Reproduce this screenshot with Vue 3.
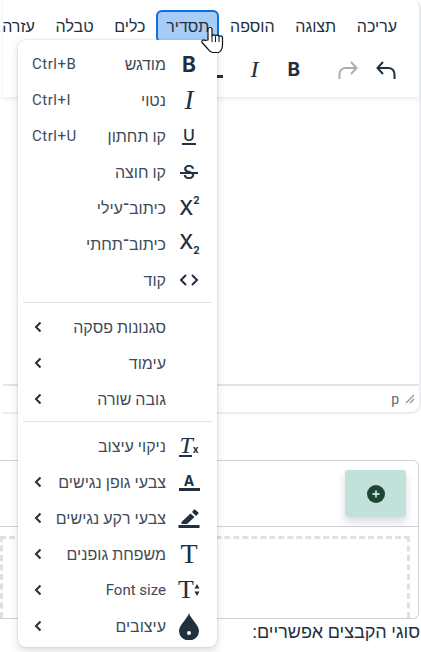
<script setup>
const menubar = ['עריכה', 'תצוגה', 'הוספה', 'תסדיר', 'כלים', 'טבלה', 'עזרה']
const groups = [
  [
    { icon: 'bold', label: 'מודגש', key: 'Ctrl+B' },
    { icon: 'italic', label: 'נטוי', key: 'Ctrl+I' },
    { icon: 'underline', label: 'קו תחתון', key: 'Ctrl+U' },
    { icon: 'strike', label: 'קו חוצה' },
    { icon: 'sup', label: 'כיתוב־עילי' },
    { icon: 'sub', label: 'כיתוב־תחתי' },
    { icon: 'code', label: 'קוד' }
  ],
  [
    { label: 'סגנונות פסקה', more: true },
    { label: 'עימוד', more: true },
    { label: 'גובה שורה', more: true }
  ],
  [
    { icon: 'clear', label: 'ניקוי עיצוב' },
    { icon: 'color', label: 'צבעי גופן נגישים', more: true },
    { icon: 'pen', label: 'צבעי רקע נגישים', more: true },
    { icon: 'family', label: 'משפחת גופנים', more: true },
    { icon: 'size', label: 'Font size', more: true, latin: true },
    { icon: 'drop', label: 'עיצובים', more: true }
  ]
]
</script>

<template>
  <div class="page" dir="rtl">
    <section class="editor">
      <div class="head">
        <nav class="menubar">
          <span v-for="m in menubar" :key="m" class="mb-item" :class="{ active: m === 'תסדיר' }">{{ m }}</span>
        </nav>
        <div class="toolbar">
          <svg class="tb-icon" viewBox="0 0 20 20"><path d="M7 2 1.500 8 7 14M1.500 8H12.500a6 6 0 0 1 6 6v5" /></svg>
          <svg class="tb-icon redo" viewBox="0 0 20 20"><path d="M13 2 18.500 8 13 14M18.500 8H7.500a6 6 0 0 0-6 6v5" /></svg>
          <span class="tb-b">B</span>
          <span class="tb-i">I</span>
          <span class="tb-u"></span>
        </div>
      </div>
      <div class="body"></div>
      <div class="status">
        <svg class="grip" viewBox="0 0 10 10"><path d="M9 1 1 9M9 5 5 9" /></svg>
        <span class="path">p</span>
      </div>
    </section>

    <section class="upload">
      <div class="upload-head">
        <button class="add" type="button">
          <svg viewBox="0 0 18 18" class="add-icon"><circle cx="9" cy="9" r="9" fill="#1d4637" /><path d="M9 5.500v7M5.500 9h7" stroke="#c3e1db" stroke-width="1.800" /></svg>
        </button>
      </div>
      <div class="upload-body"><div class="dropzone"></div></div>
    </section>
    <p class="types">סוגי הקבצים אפשריים:</p>

    <div class="menu">
      <template v-for="(group, g) in groups" :key="g">
        <hr v-if="g" class="sep" />
        <div v-for="row in group" :key="row.label" class="row">
          <span class="ico">
            <span v-if="row.icon === 'bold'" class="g-bold">B</span>
            <span v-else-if="row.icon === 'italic'" class="g-italic">I</span>
            <span v-else-if="row.icon === 'underline'" class="g-under">U</span>
            <span v-else-if="row.icon === 'strike'" class="g-strike">S</span>
            <span v-else-if="row.icon === 'sup'" class="g-x">X<sup>2</sup></span>
            <span v-else-if="row.icon === 'sub'" class="g-x g-x-sub">X<sub>2</sub></span>
            <svg v-else-if="row.icon === 'code'" viewBox="0 0 20 14" class="svg-code"><path d="M7 2 2 7l5 5M13 2l5 5-5 5" /></svg>
            <span v-else-if="row.icon === 'clear'" class="g-clear"><i>T</i><small>x</small></span>
            <span v-else-if="row.icon === 'color'" class="g-color">A</span>
            <svg v-else-if="row.icon === 'pen'" viewBox="0 0 22 20" class="svg-fill"><path d="M3.500 14 12.500 5.500l4 3.500-7.500 7H3.500zM14 4l2-2.500 1 0 3.500 3 0 1L18 8z" /><rect x="0.500" y="17" width="21" height="3" /></svg>
            <span v-else-if="row.icon === 'family'" class="g-family">T</span>
            <span v-else-if="row.icon === 'size'" class="g-size">T<svg viewBox="0 0 6 14"><path d="M3 1 5.500 5.500H.5zM3 13 .5 8.500h5z" /></svg></span>
            <svg v-else-if="row.icon === 'drop'" viewBox="0 0 20 27" class="svg-drop"><path fill-rule="evenodd" d="M10 0C11 5 20 12 20 18a10 9.500 0 0 1-20 0C0 12 9 5 10 0zM10 18a2 2 0 1 0 0 4 2 2 0 0 0 0-4z" /></svg>
          </span>
          <span class="label" :class="{ latin: row.latin }">{{ row.label }}</span>
          <span v-if="row.key" class="key" dir="ltr">{{ row.key }}</span>
          <svg v-if="row.more" class="chev" viewBox="0 0 8 12"><path d="M6.500 1.500 2 6l4.500 4.500" /></svg>
        </div>
      </template>
    </div>

    <svg class="hand" viewBox="0 0 26 30">
      <path d="M8 16V5.500a2 2 0 0 1 4 0V12a2 2 0 0 1 3.500 0 2 2 0 0 1 3.500.5 2 2 0 0 1 3.500 1V21c0 4-2 7-4 7.500h-6c-2.500-.5-3.500-2-5-4L2 18.500c-1-2 1.500-3.500 3-2z" fill="#fff" stroke="#111" stroke-width="1.200" stroke-linejoin="round" />
      <path d="M12 12v6M15.500 12.500v5.500M19 13v5" stroke="#111" stroke-width="1" fill="none" />
    </svg>
  </div>
</template>

<style scoped>
.page {
  position: relative;
  width: 421px;
  height: 652px;
  overflow: hidden;
  background: #fff;
  color: #222f3e;
  font-family: Roboto, "Liberation Sans", sans-serif;
}
.editor {
  display: flex;
  flex-direction: column;
  height: 414px;
  width: 418px;
  box-sizing: border-box;
  border-right: 2px solid #eceef1;
  border-bottom: 2px solid #eceef1;
  border-radius: 0 8px 10px 0;
}
.head {
  height: 97px;
  box-shadow: 0 2px 4px rgba(34, 47, 62, .1);
  border-radius: 0 8px 0 0;
}
.menubar {
  display: flex;
  align-items: center;
  gap: .7px;
  height: 46px;
  padding: 6px 12px 0 0;
  box-sizing: border-box;
}
.mb-item {
  padding: 0 10px;
  font-size: 16px;
  line-height: 33px;
  white-space: nowrap;
  border-radius: 6px;
}
.mb-item.active {
  background: #a6ccf7;
  outline: 2px solid #0b70e0;
  outline-offset: -2px;
}
.toolbar {
  display: flex;
  align-items: center;
  height: 47px;
  padding-right: 23px;
}
.tb-icon {
  width: 20px;
  height: 20px;
  margin-left: 18px;
  fill: none;
  stroke: #222f3e;
  stroke-width: 2;
}
.tb-icon.redo { stroke: #a9afb6; margin-left: 0; }
.tb-b {
  margin-right: 38px;
  font: 700 19px "Inter", sans-serif;
}
.tb-i {
  margin-right: 29px;
  font: italic 400 24px "Liberation Serif", serif;
}
.tb-u {
  width: 12px;
  height: 3px;
  margin: 14px 27px 0 0;
  background: #222f3e;
}
.body { flex: 1; }
.status {
  display: flex;
  align-items: center;
  gap: 6px;
  height: 28px;
  padding-right: 4px;
  border-top: 2px solid #e3e5e9;
  box-sizing: border-box;
}
.path { font-size: 14px; color: #5d6975; }
.grip {
  width: 10px;
  height: 10px;
  fill: none;
  stroke: #8c949d;
  stroke-width: 1.200;
}
.upload {
  display: flex;
  flex-direction: column;
  height: 159px;
  margin: 46px 2px 0 0;
  box-sizing: border-box;
  border: 1px solid #ced2dc;
  border-left: 0;
  border-radius: 0 6px 6px 0;
}
.upload-head {
  height: 56px;
  padding: 9px 12px 0 0;
  border-bottom: 1px solid #ced2dc;
}
.add {
  display: flex;
  align-items: center;
  justify-content: center;
  width: 61px;
  height: 47px;
  padding: 0;
  border: 0;
  border-radius: 3px;
  background: #c3e1db;
  box-shadow: 0 5px 8px rgba(60, 70, 90, .2);
}
.add-icon { width: 18px; height: 18px; }
.upload-body {
  flex: 1;
  padding: 9px 8px 0 0;
}
.dropzone {
  height: 100%;
  box-sizing: border-box;
  border: 3px dashed #e0e0e0;
  border-bottom: 0;
}
.types {
  margin: 2px 0 0;
  padding-right: 1px;
  font-size: 18px;
  line-height: 22px;
}
.menu {
  position: absolute;
  top: 40px;
  left: 18px;
  width: 199px;
  height: 607px;
  box-sizing: border-box;
  padding: 6px 5px 4px;
  background: #fff;
  border-radius: 8px;
  box-shadow: 0 0 2px rgba(34, 47, 62, .2), 0 4px 8px rgba(34, 47, 62, .16);
}
.sep {
  margin: 4px 0 6px;
  height: 0;
  border: 0;
  border-top: 1px solid #dfe2e6;
}
.row {
  display: flex;
  align-items: center;
  height: 36px;
  font-size: 16px;
  color: #3f4b58;
}
.ico {
  flex: none;
  width: 46px;
  display: flex;
  align-items: center;
  justify-content: center;
  color: #222f3e;
  direction: ltr;
}
.label { flex: none; white-space: nowrap; }
.label.latin { font-size: 15px; }
.key {
  margin-right: auto;
  margin-left: 9px;
  font-size: 15px;
  letter-spacing: .5px;
}
.chev {
  width: 8px;
  height: 12px;
  margin-right: auto;
  margin-left: 11px;
  fill: none;
  stroke: #222f3e;
  stroke-width: 2;
}
.g-bold { font: 700 21px/1 "Inter", sans-serif; }
.g-italic { font: italic 400 27px/1 "Liberation Serif", serif; }
.g-under {
  padding: 0 1px;
  font: 500 16px/15px "Inter", sans-serif;
  border-bottom: 2px solid #222f3e;
}
.g-strike {
  position: relative;
  font: 500 19px/1 "Inter", sans-serif;
}
.g-strike::after {
  content: "";
  position: absolute;
  left: -3px;
  right: -3px;
  top: 9px;
  border-top: 2px solid #222f3e;
}
.g-x {
  display: flex;
  align-items: flex-start;
  padding-left: 1px;
  font: 500 20px/1 "Inter", sans-serif;
}
.g-x sup { font: 700 10px/1 "Inter", sans-serif; margin-top: -3px; }
.g-x-sub { align-items: flex-end; margin-top: -4px; }
.g-x sub { font: 700 10px/1 "Inter", sans-serif; margin-bottom: -3px; }
.svg-code {
  width: 20px;
  height: 14px;
  fill: none;
  stroke: #222f3e;
  stroke-width: 2;
}
.g-clear {
  position: relative;
  display: flex;
  align-items: flex-end;
  padding-bottom: 2px;
}
.g-clear::after {
  content: "";
  position: absolute;
  left: 0;
  right: 7px;
  bottom: 0;
  border-top: 2px solid #222f3e;
}
.g-clear i { font: italic 400 24px/20px "Liberation Serif", serif; }
.g-clear small { font: 700 10px/1 "Inter", sans-serif; margin-bottom: 1px; }
.g-color {
  width: 21px;
  text-align: center;
  font: 700 14px/15px "Inter", sans-serif;
  border-bottom: 3px solid #222f3e;
}
.svg-fill {
  width: 22px;
  height: 20px;
  fill: #222f3e;
}
.g-family { font: 400 28px/1 "Liberation Serif", serif; }
.g-size {
  display: flex;
  align-items: center;
  font: 400 26px/1 "Liberation Serif", serif;
}
.g-size svg { width: 6px; height: 14px; fill: #222f3e; }
.svg-drop {
  width: 20px;
  height: 27px;
  fill: #222f3e;
}
.hand {
  position: absolute;
  top: 24px;
  left: 200px;
  width: 26px;
  height: 30px;
}
</style>
